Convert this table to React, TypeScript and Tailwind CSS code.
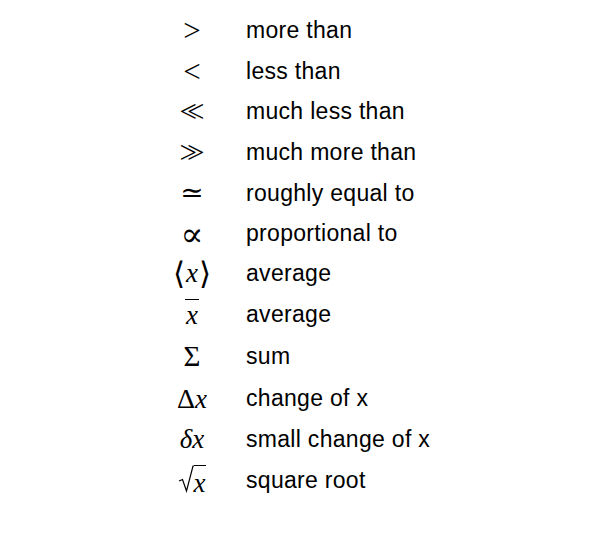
const serif = "font-['Liberation_Serif','DejaVu_Serif',serif]";
const dejavu = "font-['DejaVu_Serif',serif]";

function X() {
  return <span className="font-['Liberation_Serif',serif] italic text-[27px] leading-none">x</span>;
}

const rows: { sym: React.ReactNode; label: string; h: string }[] = [
  { sym: <span className="text-[31px] leading-none">&gt;</span>, label: 'more than', h: 'h-[41px]' },
  { sym: <span className="text-[31px] leading-none">&lt;</span>, label: 'less than', h: 'h-[40px]' },
  {
    sym: <span className="text-[31px] leading-none tracking-[-10px] pr-[10px]">&lt;&lt;</span>,
    label: 'much less than',
    h: 'h-[41px]',
  },
  {
    sym: <span className="text-[31px] leading-none tracking-[-10px] pr-[10px]">&gt;&gt;</span>,
    label: 'much more than',
    h: 'h-[40px]',
  },
  { sym: <span className={`${dejavu} text-[28px] leading-none`}>≃</span>, label: 'roughly equal to', h: 'h-[42px]' },
  { sym: <span className={`${dejavu} text-[34px] leading-none`}>∝</span>, label: 'proportional to', h: 'h-[39px]' },
  {
    sym: (
      <span className="flex items-center gap-[1px]">
        <span className={`${dejavu} text-[31px] leading-none`}>⟨</span>
        <X />
        <span className={`${dejavu} text-[31px] leading-none`}>⟩</span>
      </span>
    ),
    label: 'average',
    h: 'h-[41px]',
  },
  {
    sym: (
      <span className="border-t-[1.5px] border-black px-[1px] pt-[2px] leading-none">
        <X />
      </span>
    ),
    label: 'average',
    h: 'h-[40px]',
  },
  { sym: <span className="text-[29px] leading-none">Σ</span>, label: 'sum', h: 'h-[44px]' },
  {
    sym: (
      <span className="leading-none">
        <span className="text-[28px]">Δ</span>
        <X />
      </span>
    ),
    label: 'change of x',
    h: 'h-[41px]',
  },
  {
    sym: (
      <span className="leading-none">
        <span className="italic text-[27px]">δ</span>
        <X />
      </span>
    ),
    label: 'small change of x',
    h: 'h-[41px]',
  },
  {
    sym: (
      <span className="flex items-start">
        <svg width="16" height="28" viewBox="0 0 16 28">
          <path d="M1 16 L4.5 14.5 L8.5 26 L15 1 L16 1" fill="none" stroke="black" strokeWidth="1.2" />
        </svg>
        <span className="border-t-[1.2px] border-black pt-[4px] pr-[1px] leading-none">
          <X />
        </span>
      </span>
    ),
    label: 'square root',
    h: 'h-[41px]',
  },
];

export default function App() {
  return (
    <div className="w-[600px] h-[541px] bg-white pt-[10px] text-black">
      {rows.map((r, i) => (
        <div key={i} className={`flex items-center ${r.h}`}>
          <div className={`w-[60px] ml-[162px] flex justify-center ${serif}`}>{r.sym}</div>
          <div className="ml-[24px] font-['Liberation_Sans',Arial,sans-serif] text-[23px] tracking-[0.3px]">
            {r.label}
          </div>
        </div>
      ))}
    </div>
  );
}
